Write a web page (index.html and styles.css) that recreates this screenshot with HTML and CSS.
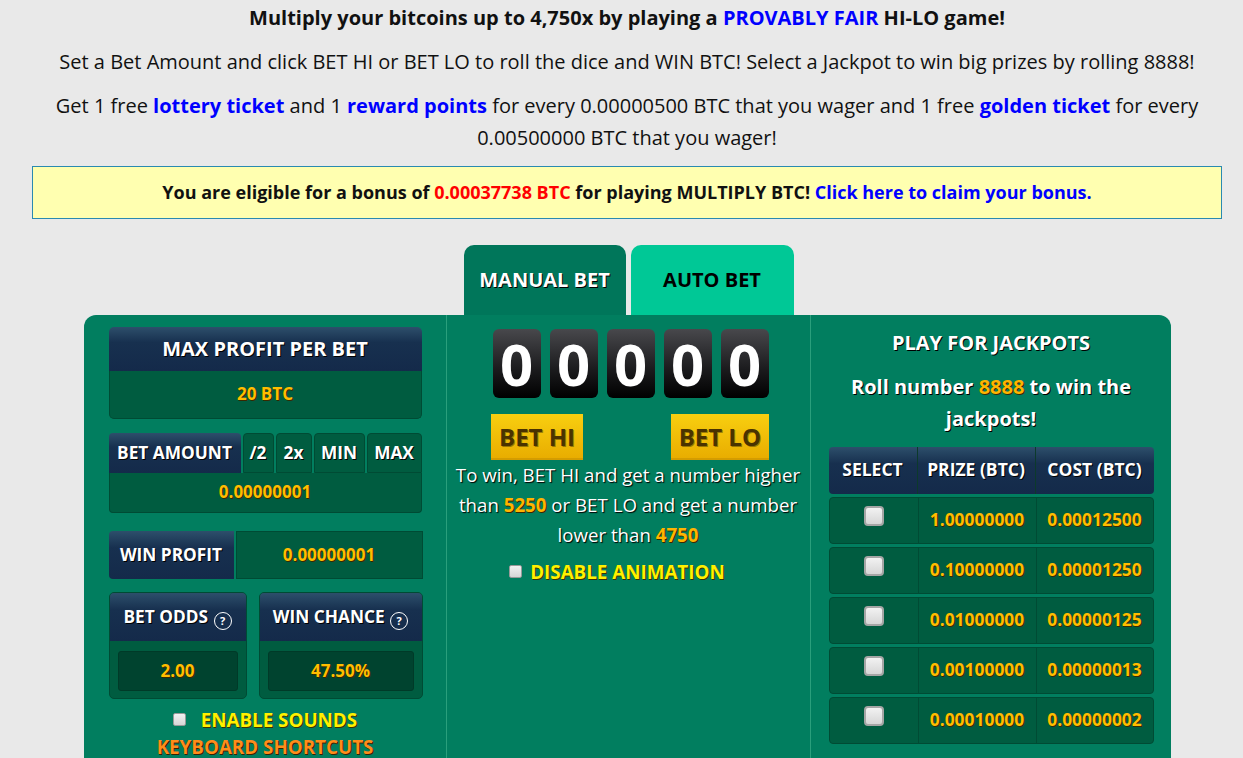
FILE: index.html
```html
<!DOCTYPE html>
<html lang="en">
<head>
    <meta charset="UTF-8">
    <title>Multiply BTC</title>
    <link rel="stylesheet" href="styles.css">
</head>
<body>
    <div class="page">

        <!-- intro text -->
        <div class="intro">
            <p class="lead">Multiply your bitcoins up to 4,750x by playing a <a href="#" class="link">PROVABLY FAIR</a> HI-LO game!</p>
            <p>Set a Bet Amount and click BET HI or BET LO to roll the dice and WIN BTC! Select a Jackpot to win big prizes by rolling 8888!</p>
            <p>Get 1 free <a href="#" class="link">lottery ticket</a> and 1 <a href="#" class="link">reward points</a> for every 0.00000500 BTC that you wager and 1 free <a href="#" class="link">golden ticket</a> for every 0.00500000 BTC that you wager!</p>
        </div>

        <div class="bonus">
            You are eligible for a bonus of <span class="red">0.00037738 BTC</span> for playing MULTIPLY BTC! <a href="#" class="link">Click here to claim your bonus.</a>
        </div>

        <div class="tabs">
            <div class="tab active">MANUAL BET</div>
            <div class="tab">AUTO BET</div>
        </div>

        <div class="game">
            <!-- left: bet settings -->
            <div class="col left">
                <div class="box-head max-head">MAX PROFIT PER BET</div>
                <div class="box-value max-value">20 BTC</div>

                <div class="amount-row">
                    <div class="cell head">BET AMOUNT</div>
                    <div class="cell btn">/2</div>
                    <div class="cell btn">2x</div>
                    <div class="cell btn">MIN</div>
                    <div class="cell btn">MAX</div>
                </div>
                <div class="amount-input">0.00000001</div>

                <div class="profit-row">
                    <div class="cell head">WIN PROFIT</div>
                    <div class="profit-value">0.00000001</div>
                </div>

                <div class="odds-row">
                    <div class="odds-box">
                        <div class="odds-head">BET ODDS <span class="help">?</span></div>
                        <div class="odds-input">2.00</div>
                    </div>
                    <div class="odds-box">
                        <div class="odds-head">WIN CHANCE <span class="help">?</span></div>
                        <div class="odds-input">47.50%</div>
                    </div>
                </div>

                <div class="option"><input type="checkbox" class="check"> ENABLE SOUNDS</div>
                <div class="shortcuts">KEYBOARD SHORTCUTS</div>
            </div>

            <!-- middle: roll -->
            <div class="col middle">
                <div class="digits">
                    <div class="digit">0</div>
                    <div class="digit">0</div>
                    <div class="digit">0</div>
                    <div class="digit">0</div>
                    <div class="digit">0</div>
                </div>
                <div class="bets">
                    <button class="bet-btn">BET HI</button>
                    <button class="bet-btn">BET LO</button>
                </div>
                <p class="rule">To win, BET HI and get a number higher than <span class="gold">5250</span> or BET LO and get a number lower than <span class="gold">4750</span></p>
                <div class="option anim"><input type="checkbox" class="check"> DISABLE ANIMATION</div>
            </div>

            <!-- right: jackpots -->
            <div class="col right">
                <h3>PLAY FOR JACKPOTS</h3>
                <p class="roll">Roll number <span class="gold">8888</span> to win the jackpots!</p>

                <div class="jp-head">
                    <div>SELECT</div>
                    <div>PRIZE (BTC)</div>
                    <div>COST (BTC)</div>
                </div>
                <div class="jp-row">
                    <div class="sel"><input type="checkbox" class="check big"></div>
                    <div>1.00000000</div>
                    <div>0.00012500</div>
                </div>
                <div class="jp-row">
                    <div class="sel"><input type="checkbox" class="check big"></div>
                    <div>0.10000000</div>
                    <div>0.00001250</div>
                </div>
                <div class="jp-row">
                    <div class="sel"><input type="checkbox" class="check big"></div>
                    <div>0.01000000</div>
                    <div>0.00000125</div>
                </div>
                <div class="jp-row">
                    <div class="sel"><input type="checkbox" class="check big"></div>
                    <div>0.00100000</div>
                    <div>0.00000013</div>
                </div>
                <div class="jp-row">
                    <div class="sel"><input type="checkbox" class="check big"></div>
                    <div>0.00010000</div>
                    <div>0.00000002</div>
                </div>
            </div>
        </div>
    </div>
</body>
</html>
```

FILE: styles.css
```css
* {
    box-sizing: border-box;
}

html {
    overflow: hidden;
}

body {
    margin: 0;
    background: #e9e9e9;
    font-family: 'Open Sans', sans-serif;
    color: #111;
}

.page {
    width: 1190px;
    margin-left: 32px;
}

/* intro */
.intro {
    padding-top: 2px;
    text-align: center;
}

.intro p {
    margin: 0 0 12px;
    font-size: 20px;
    line-height: 32px;
}

.intro p:last-child {
    margin-bottom: 0;
}

.intro .lead {
    font-weight: 700;
}

.link {
    color: #0000ff;
    font-weight: 700;
    text-decoration: none;
}

.bonus {
    margin-top: 12px;
    padding: 14px 10px;
    background: #ffffb0;
    border: 1px solid #2a8ab0;
    text-align: center;
    font-size: 18px;
    font-weight: 700;
    line-height: 23px;
}

.red {
    color: #ff0000;
}

/* tabs */
.tabs {
    display: flex;
    justify-content: center;
    gap: 5px;
    margin-top: 26px;
    padding-left: 3px;
}

.tab {
    width: 163px;
    height: 70px;
    line-height: 70px;
    border-radius: 10px 10px 0 0;
    background: #00c896;
    text-align: center;
    font-size: 20px;
    font-weight: 700;
    color: #000;
}

.tab.active {
    width: 162px;
    background: #00765a;
    color: #fff;
    text-shadow: 1px 1px 0 #000;
}

/* main panel */
.game {
    width: 1087px;
    margin: 0 auto;
    padding-left: 1px;
    min-height: 460px;
    background: #017e5f;
    border-radius: 12px 12px 0 0;
    display: grid;
    grid-template-columns: 361px 365px 361px;
    color: #fff;
}

.gold {
    color: #ffb400;
    font-weight: 700;
    text-shadow: 1px 1px 0 #3a2800;
}

.box-head,
.cell.head,
.odds-head,
.jp-head {
    background: linear-gradient(#2d4f6b, #17304f 35%, #142a4a);
    color: #fff;
    font-weight: 700;
    text-shadow: 1px 1px 0 #000;
    text-align: center;
}

/* left column */
.left {
    padding: 12px 24px 0;
}

.max-head {
    height: 44px;
    line-height: 44px;
    font-size: 20px;
    border-radius: 5px 5px 0 0;
}

.box-value,
.amount-input,
.profit-value,
.jp-row,
.cell.btn {
    background: #005c40;
    border: 1px solid #004b34;
    color: #ffbd00;
    font-weight: 700;
    text-align: center;
    text-shadow: 1px 1px 0 #3a2800;
}

.max-value {
    height: 48px;
    line-height: 46px;
    font-size: 17px;
    border-top: none;
    border-radius: 0 0 5px 5px;
}

.amount-row {
    display: grid;
    grid-template-columns: 132px 31px 36px 51px 1fr;
    gap: 2px;
    margin-top: 14px;
    height: 40px;
}

.cell {
    line-height: 40px;
    font-size: 17.3px;
    font-weight: 700;
    border-radius: 4px 4px 0 0;
}

.cell.btn {
    color: #fff;
    line-height: 38px;
    text-shadow: 1px 1px 0 #000;
}

.amount-input {
    height: 40px;
    line-height: 38px;
    font-size: 17px;
    border-radius: 0 0 4px 4px;
    border-top: none;
}

.profit-row {
    display: grid;
    grid-template-columns: 125px 1fr;
    gap: 2px;
    margin-top: 18px;
    height: 48px;
}

.profit-row .cell.head {
    line-height: 48px;
    border-radius: 4px 0 0 4px;
}

.profit-value {
    line-height: 46px;
    font-size: 17px;
    margin-right: -1px;
}

.odds-row {
    display: grid;
    grid-template-columns: 138px 1fr;
    gap: 12px;
    margin-top: 13px;
    margin-right: -1px;
}

.odds-box {
    height: 107px;
    background: #005c40;
    border: 1px solid #004b34;
    border-radius: 5px;
    overflow: hidden;
}

.odds-head {
    height: 48px;
    line-height: 48px;
    font-size: 17.3px;
}

.help {
    display: inline-block;
    width: 18px;
    height: 18px;
    margin-left: 1px;
    border: 1px solid #fff;
    border-radius: 50%;
    font-size: 11px;
    line-height: 16px;
    vertical-align: -2px;
    text-shadow: none;
}

.odds-input {
    margin: 10px 8px 0;
    height: 40px;
    line-height: 38px;
    background: #00432f;
    border: 1px solid #003a28;
    border-radius: 3px;
    text-align: center;
    color: #ffbd00;
    font-size: 17px;
    font-weight: 700;
    text-shadow: 1px 1px 0 #3a2800;
}

.option {
    margin-top: 10px;
    text-align: center;
    font-size: 18.8px;
    font-weight: 700;
    line-height: 22px;
    color: #fff000;
    text-shadow: 1px 1px 0 #3a3000;
}

.check {
    appearance: none;
    -webkit-appearance: none;
    width: 13px;
    height: 13px;
    margin: 0 10px 0 0;
    vertical-align: 1px;
    background: linear-gradient(#f2f2f2, #d6d6d6);
    border: 1px solid #9a9a9a;
    border-radius: 2px;
}

.check.big {
    width: 20px;
    height: 20px;
    margin: 0;
    border: 2px solid #a5a5a5;
    border-radius: 4px;
}

.shortcuts {
    margin-top: 5px;
    text-align: center;
    font-size: 18.8px;
    font-weight: 700;
    line-height: 22px;
    color: #ff8c1a;
    text-shadow: 1px 1px 0 #3a2000;
}

/* middle column */
.middle {
    padding: 14px 4px 0;
    text-align: center;
    border-left: 1px solid rgba(120, 220, 180, 0.35);
    border-right: 1px solid rgba(120, 220, 180, 0.35);
}

.digits {
    display: flex;
    justify-content: center;
    gap: 9px;
    padding-left: 5px;
}

.digit {
    width: 48px;
    height: 69px;
    line-height: 69px;
    border-radius: 6px;
    background: linear-gradient(#48484c, #1a1a1c 60%, #000);
    font-size: 58px;
    font-weight: 700;
    color: #fff;
}

.bets {
    display: flex;
    justify-content: space-between;
    width: 278px;
    margin: 16px auto 0;
    position: relative;
    left: 2px;
}

.bet-btn {
    height: 46px;
    padding: 0 8px;
    border: none;
    border-bottom: 2px solid #d49c00;
    background: linear-gradient(#f8cf10, #e9ad00);
    font-family: 'Open Sans', sans-serif;
    font-size: 24px;
    font-weight: 700;
    color: #4a3300;
    text-shadow: 1px 1px 0 rgba(0, 0, 0, 0.35);
}

.rule {
    margin: 0;
    font-size: 18.7px;
    line-height: 30px;
    text-shadow: 1px 1px 1px #000;
}

.anim {
    margin-top: 7px;
    line-height: 30px;
    padding-right: 22px;
}

.anim .check {
    margin-right: 3px;
}

/* right column */
.right {
    padding: 14px 18px 0;
    text-align: center;
}

.right h3 {
    margin: 0;
    font-size: 20px;
    line-height: 28px;
    text-shadow: 1px 1px 0 #000;
}

.roll {
    margin: 14px 0 0;
    font-size: 20px;
    font-weight: 700;
    line-height: 32px;
    text-shadow: 1px 1px 0 #000;
}

.jp-head,
.jp-row {
    display: grid;
    grid-template-columns: 88px 118px 1fr;
    height: 47px;
    border-radius: 4px;
}

.jp-head {
    margin-top: 12px;
    font-size: 17.5px;
    line-height: 45px;
}

.jp-head div + div {
    border-left: 1px solid #0c3a2c;
}

.jp-row {
    margin-top: 3px;
    font-size: 17.4px;
    align-items: center;
}

.jp-row div {
    height: 100%;
    display: flex;
    align-items: center;
    justify-content: center;
    padding-bottom: 3px;
}

.jp-row div + div {
    border-left: 1px solid #004b34;
}

.jp-row .sel {
    align-items: flex-start;
    padding: 8px 0 0;
}
```
